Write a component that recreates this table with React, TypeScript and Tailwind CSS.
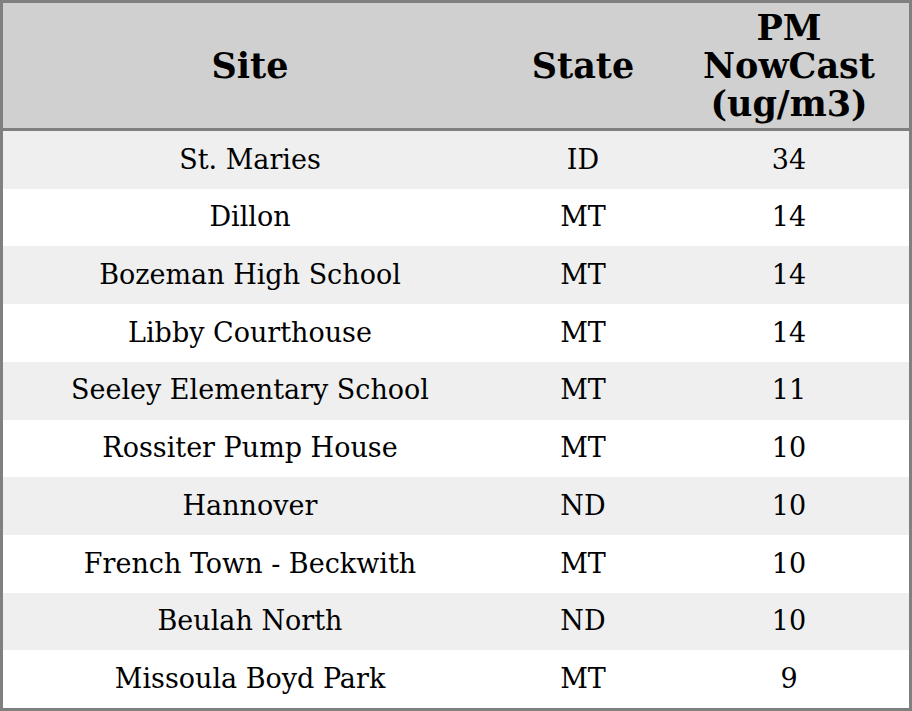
const rows = [
  { site: "St. Maries", state: "ID", pm: "34" },
  { site: "Dillon", state: "MT", pm: "14" },
  { site: "Bozeman High School", state: "MT", pm: "14" },
  { site: "Libby Courthouse", state: "MT", pm: "14" },
  { site: "Seeley Elementary School", state: "MT", pm: "11" },
  { site: "Rossiter Pump House", state: "MT", pm: "10" },
  { site: "Hannover", state: "ND", pm: "10" },
  { site: "French Town - Beckwith", state: "MT", pm: "10" },
  { site: "Beulah North", state: "ND", pm: "10" },
  { site: "Missoula Boyd Park", state: "MT", pm: "9" },
];

export default function App() {
  return (
    <div className="w-[912px] h-[711px] border-[3px] border-[#808080] bg-white flex flex-col text-black font-['DejaVu_Serif',serif]">
      <div className="h-[128px] shrink-0 bg-[#d0d0d0] border-b-[3px] border-[#808080] grid grid-cols-[494px_172px_1fr] items-center text-center font-bold text-[35px] leading-[38px]">
        <div>Site</div>
        <div>State</div>
        <div>
          PM
          <br />
          NowCast
          <br />
          (ug/m3)
        </div>
      </div>
      {rows.map((r, i) => (
        <div
          key={i}
          className={`flex-1 grid grid-cols-[494px_172px_1fr] items-center text-center text-[27px] ${
            i % 2 === 0 ? "bg-[#efefef]" : "bg-white"
          }`}
        >
          <div>{r.site}</div>
          <div>{r.state}</div>
          <div>{r.pm}</div>
        </div>
      ))}
    </div>
  );
}
